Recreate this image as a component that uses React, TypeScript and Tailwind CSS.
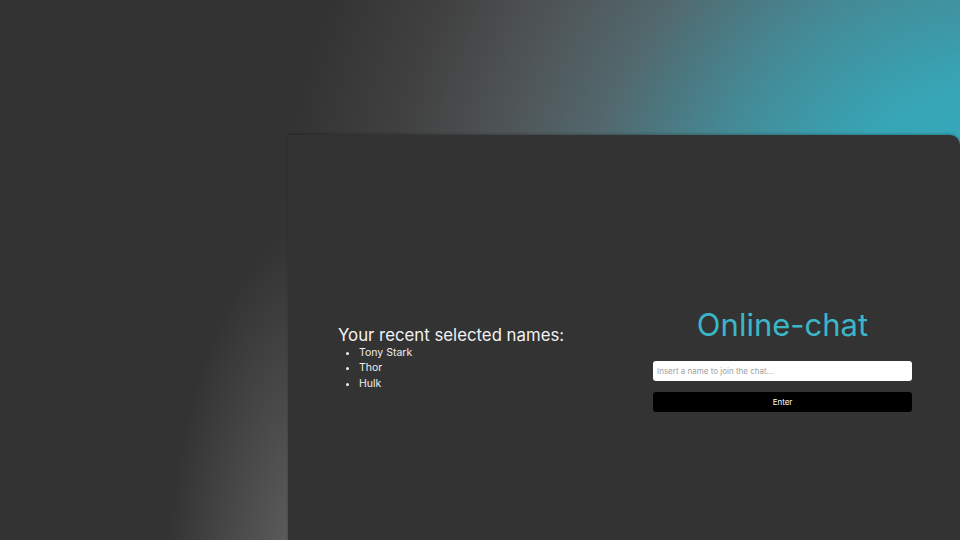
const NAMES = ['Tony Stark', 'Thor', 'Hulk'];

export default function App() {
  return (
    <div
      className="w-[960px] h-[540px] overflow-hidden flex flex-col bg-[#333333] bg-[radial-gradient(160px_400px_at_325px_620px,#6c6c6c,rgba(51,51,51,0)),radial-gradient(circle_at_1000px_260px,#2fb0c4_0px,#37a5b5_180px,#448a96_300px,#52686d_420px,#4f5557_510px,#414141_610px,#333333_720px)]"
      style={{ fontFamily: 'Inter, "Noto Sans", sans-serif' }}
    >
      <div className="h-[135px] shrink-0" />
      <div className="flex-1 flex">
        <div className="w-[288px] shrink-0" />
        {/* Card */}
        <div className="flex-1 h-[446px] bg-[#333333] rounded-tr-[10px] shadow-[0_-1px_3px_rgba(0,0,0,0.25)] flex items-center">
          {/* Recent names */}
          <div className="w-[365px] pl-[50px] text-white">
            <h2 className="text-[16.8px] leading-[20px] font-normal text-[#f2f2f2]">Your recent selected names:</h2>
            <ul className="list-disc pl-[21px] text-[10.5px] leading-[15.5px] text-[#eeeeee]">
              {NAMES.map(n => <li key={n}>{n}</li>)}
            </ul>
          </div>

          {/* Join form */}
          <div className="w-[259px] flex flex-col items-stretch">
            <h1 className="text-center text-[31px] leading-[40px] font-normal text-[#3bb6c9] mb-[16px]">Online-chat</h1>
            <input
              className="h-[20px] bg-white rounded-[3px] px-[4px] text-[8px] text-black placeholder:text-[#a0a0a0] outline-none"
              placeholder="Insert a name to join the chat..."
            />
            <button className="mt-[11px] h-[20px] bg-black rounded-[3px] text-white text-[8px]">Enter</button>
          </div>
        </div>
      </div>
    </div>
  );
}
